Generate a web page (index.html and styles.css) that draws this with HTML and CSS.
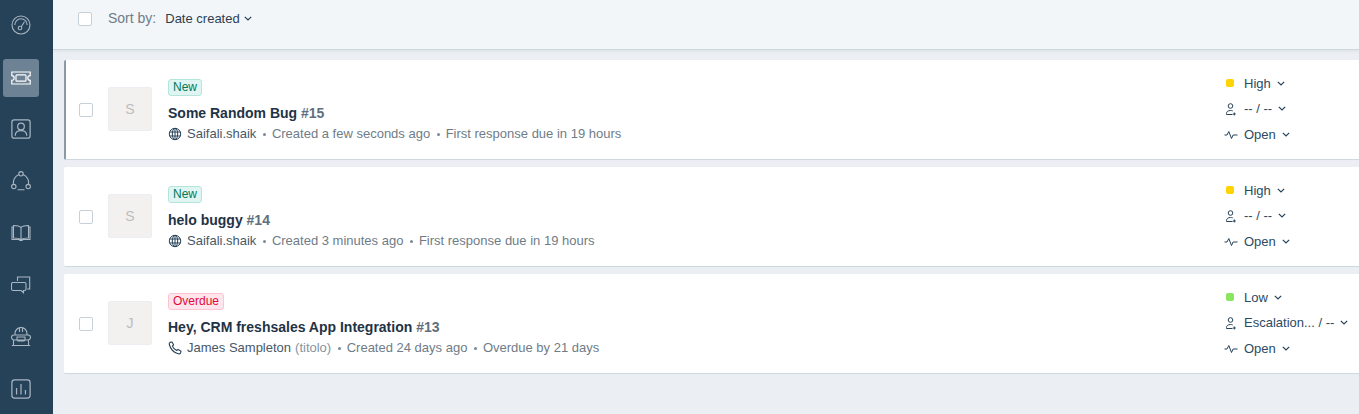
FILE: index.html
```html
<!DOCTYPE html>
<html lang="en">
<head>
<meta charset="utf-8">
<title>Tickets</title>
<link rel="stylesheet" href="styles.css">
</head>
<body>
<svg class="defs" width="0" height="0" aria-hidden="true">
  <symbol id="globe" viewBox="0 0 14 14"><g fill="none" stroke="currentColor" stroke-width="1"><circle cx="7" cy="7" r="5.700"/><ellipse cx="7" cy="7" rx="2.700" ry="5.700"/><path d="M7 1.300v11.400M1.600 5h10.800M1.600 9h10.800"/></g></symbol>
  <symbol id="phone" viewBox="0 0 14 14"><path fill="none" stroke="currentColor" stroke-width="1.100" stroke-linejoin="round" d="M2 1.400 4 1l1.600 2.800-1.200 1.300c.7 1.900 2.300 3.500 4.300 4.400l1.300-1.100L13 10.200l-.5 1.800c-.3.800-1.300 1-2.200.8C6 11.600 2.500 8 1.300 3.500 1.100 2.600 1.300 1.800 2 1.400Z"/></symbol>
  <symbol id="agent" viewBox="0 0 14 14"><g fill="none" stroke="currentColor" stroke-width="1"><circle cx="6.500" cy="4" r="2.300"/><path d="M2.500 12.500v-1c0-1.800 1.500-3 4-3 .8 0 1.500.1 2.200.4M2.500 12.500h6"/><path d="M10.300 10.500v3M8.800 12h3"/></g></symbol>
  <symbol id="pulse" viewBox="0 0 14 14"><path fill="none" stroke="currentColor" stroke-width="1" d="M.5 8h2.500l1.800-3.500 2.700 7 1.600-3.500h4.400"/></symbol>
  <symbol id="chev" viewBox="0 0 8 5"><path fill="none" stroke="currentColor" stroke-width="1.200" d="M.8.800 4 4l3.200-3.200"/></symbol>
</svg>

<div class="app">
  <nav class="rail">
    <a class="rail-item"><svg class="rail-icon" viewBox="0 0 20 20"><circle cx="10" cy="10" r="9"/><path d="M3.800 10A6.200 6.200 0 0 1 10 3.800a6.200 6.200 0 0 1 6.200 6.200"/><circle cx="9" cy="13" r="1.800"/><path d="m10.200 11.700 3.300-5"/></svg></a>
    <a class="rail-item active"><svg class="rail-icon ticket" viewBox="0 0 20 14"><path d="M.8 1h18.400v3.600a2.400 2.400 0 0 0 0 4.800V13H.8V9.400a2.400 2.400 0 0 0 0-4.800Z"/><rect x="5" y="3.800" width="10" height="6.400" rx="1"/></svg></a>
    <a class="rail-item"><svg class="rail-icon" viewBox="0 0 18 18"><rect x=".8" y=".8" width="16.400" height="16.400" rx="2"/><circle cx="9" cy="6.800" r="3"/><path d="M3.800 15c0-3 2-4.500 5.200-4.500s5.200 1.500 5.200 4.500"/></svg></a>
    <a class="rail-item"><svg class="rail-icon" viewBox="0 0 20 20"><circle cx="10" cy="2.800" r="2.200"/><circle cx="2.800" cy="15.600" r="2.200"/><circle cx="17.200" cy="15.600" r="2.200"/><path d="M7.900 3.600A8.800 8.800 0 0 0 2.400 13.300M12.100 3.600a8.800 8.800 0 0 1 5.500 9.700M6.500 18.800h7"/></svg></a>
    <a class="rail-item"><svg class="rail-icon" viewBox="0 0 20 18"><path d="M10 3.500C8.500 2 6 1.500 2.500 1.500v12.500c3.500 0 6 .5 7.500 1.500 1.500-1 4-1.500 7.500-1.500V1.500C14 1.500 11.500 2 10 3.500ZM10 3.500v12M2.500 3H1v12.500h7l1 1h2l1-1h7V3h-1.500"/></svg></a>
    <a class="rail-item"><svg class="rail-icon" viewBox="0 0 20 20"><path d="M6.500 6V2h12.200v12h-2.500"/><path d="M2 7.500h11.500c.8 0 1.500.7 1.500 1.500v5c0 .8-.7 1.500-1.500 1.500h-1v2.200l-2.400-2.200H2c-.8 0-1.500-.7-1.500-1.500V9c0-.8.700-1.500 1.500-1.500Z"/></svg></a>
    <a class="rail-item"><svg class="rail-icon" viewBox="0 0 20 20"><path d="M4 8V6.500a6 6 0 0 1 12 0V8M8.500 1v4M11.500 1v4M3 8h14c1.500 0 2.500 1 2.500 2.300S18.500 13 17 13h-3l-1 1H7l-1-1H3c-1.500 0-2.500-1.200-2.500-2.700S1.500 8 3 8ZM6 10h8v3H6ZM2.500 13v5M17.500 13v5M.8 18.500h18.400"/></svg></a>
    <a class="rail-item"><svg class="rail-icon" viewBox="0 0 18 18"><rect x=".8" y=".8" width="16.400" height="16.400" rx="2.500"/><path d="M5 8v6M9 4.500V14M13 10v4"/></svg></a>
  </nav>

  <main class="main">
    <header class="toolbar">
      <span class="checkbox"></span>
      <span class="sort-label">Sort by:</span>
      <span class="sort-value">Date created</span>
      <svg class="chev sort-chev"><use href="#chev"/></svg>
    </header>

    <section class="list">
      <article class="card selected">
        <span class="checkbox"></span>
        <div class="avatar">S</div>
        <div class="body">
          <span class="badge new">New</span>
          <h2 class="title">Some Random Bug <span class="num">#15</span></h2>
          <p class="meta"><svg class="source"><use href="#globe"/></svg><span class="who">Saifali.shaik</span><span class="dot"></span>Created a few seconds ago<span class="dot"></span>First response due in 19 hours</p>
        </div>
        <div class="props">
          <div class="prop"><span class="lead"><i class="pri high"></i></span>High<svg class="chev"><use href="#chev"/></svg></div>
          <div class="prop"><span class="lead"><svg class="pico"><use href="#agent"/></svg></span>-- / --<svg class="chev"><use href="#chev"/></svg></div>
          <div class="prop"><span class="lead"><svg class="pico"><use href="#pulse"/></svg></span>Open<svg class="chev"><use href="#chev"/></svg></div>
        </div>
      </article>

      <article class="card">
        <span class="checkbox"></span>
        <div class="avatar">S</div>
        <div class="body">
          <span class="badge new">New</span>
          <h2 class="title">helo buggy <span class="num">#14</span></h2>
          <p class="meta"><svg class="source"><use href="#globe"/></svg><span class="who">Saifali.shaik</span><span class="dot"></span>Created 3 minutes ago<span class="dot"></span>First response due in 19 hours</p>
        </div>
        <div class="props">
          <div class="prop"><span class="lead"><i class="pri high"></i></span>High<svg class="chev"><use href="#chev"/></svg></div>
          <div class="prop"><span class="lead"><svg class="pico"><use href="#agent"/></svg></span>-- / --<svg class="chev"><use href="#chev"/></svg></div>
          <div class="prop"><span class="lead"><svg class="pico"><use href="#pulse"/></svg></span>Open<svg class="chev"><use href="#chev"/></svg></div>
        </div>
      </article>

      <article class="card">
        <span class="checkbox"></span>
        <div class="avatar">J</div>
        <div class="body">
          <span class="badge overdue">Overdue</span>
          <h2 class="title">Hey, CRM freshsales App Integration <span class="num">#13</span></h2>
          <p class="meta"><svg class="source"><use href="#phone"/></svg><span class="who">James Sampleton</span><span class="org">(titolo)</span><span class="dot"></span>Created 24 days ago<span class="dot"></span>Overdue by 21 days</p>
        </div>
        <div class="props">
          <div class="prop"><span class="lead"><i class="pri low"></i></span>Low<svg class="chev"><use href="#chev"/></svg></div>
          <div class="prop"><span class="lead"><svg class="pico"><use href="#agent"/></svg></span>Escalation... / --<svg class="chev"><use href="#chev"/></svg></div>
          <div class="prop"><span class="lead"><svg class="pico"><use href="#pulse"/></svg></span>Open<svg class="chev"><use href="#chev"/></svg></div>
        </div>
      </article>
    </section>
  </main>
</div>
</body>
</html>
```
FILE: styles.css
```css
* { box-sizing: border-box; }
html, body { margin: 0; height: 100%; overflow: hidden; }
body {
  font-family: "Liberation Sans", Arial, sans-serif;
  font-size: 13px;
  color: #475867;
  background: #ebeff3;
}
.defs { position: absolute; }
.app { display: flex; height: 414px; }

.rail {
  width: 53px;
  flex: none;
  background: #264259;
  display: flex;
  flex-direction: column;
  gap: 14px;
  padding: 6px 0 0 3px;
}
.rail-item {
  width: 36px;
  height: 38px;
  flex: none;
  border-radius: 3px;
  display: flex;
  align-items: center;
  justify-content: center;
}
.rail-item.active { background: #6d8294; margin: 1px 0 -1px; }
.rail-icon {
  width: 20px;
  height: 20px;
  fill: none;
  stroke: #a9b6c1;
  stroke-width: 1.100;
}
.active .rail-icon { stroke: #fff; }
.rail-icon.ticket { height: 14px; stroke-width: 1.200; }

.main { flex: 1; min-width: 0; }
.toolbar {
  height: 50px;
  background: #f3f6f9;
  border-bottom: 1px solid #cfd7df;
  box-shadow: 0 1px 3px rgba(18, 52, 77, .08);
  display: flex;
  align-items: center;
  padding: 0 0 12px 25px;
}
.checkbox {
  width: 14px;
  height: 14px;
  flex: none;
  background: #fff;
  border: 1px solid #c7d0d9;
  border-radius: 2px;
}
.sort-label { margin-left: 16px; color: #6f7c87; font-size: 14px; margin-top: -1px; }
.sort-value { margin-left: 9px; color: #2c3e50; }
.chev { width: 8px; height: 5px; color: #264259; flex: none; margin-left: 6px; }
.sort-chev { margin-left: 4px; }

.list {
  display: flex;
  flex-direction: column;
  gap: 7px;
  padding: 10px 0 0 11px;
}
.card {
  height: 100px;
  background: #fff;
  border-bottom: 1px solid #cfd7df;
  border-radius: 2px 0 0 2px;
  display: flex;
  padding: 0 0 0 15px;
}
.card.selected { border-left: 2px solid #8b98a5; padding-left: 13px; }
.card > .checkbox { margin-top: 43px; }
.avatar {
  width: 44px;
  height: 44px;
  flex: none;
  margin: 27px 0 0 15px;
  background: #f2f1ef;
  border: 1px solid #ebeff3;
  border-radius: 2px;
  color: #bdbdbd;
  font-size: 14px;
  display: flex;
  align-items: center;
  justify-content: center;
}
.body { margin-left: 16px; padding-top: 19px; flex: 1; min-width: 0; }
.badge {
  display: block;
  width: fit-content;
  height: 17px;
  line-height: 15px;
  padding: 0 4px;
  font-size: 12px;
  border: 1px solid;
  border-radius: 3px;
}
.badge.new { color: #00795b; background: #e0f5f1; border-color: #b4e5da; }
.badge.overdue { color: #e0093a; background: #ffe5ec; border-color: #ffc4d4; }
.title {
  margin: 8px 0 0;
  font-size: 14px;
  line-height: 18px;
  font-weight: 700;
  color: #1f3346;
}
.num { color: #5f6f7e; font-weight: 700; }
.meta {
  margin: 3px 0 0;
  height: 18px;
  line-height: 18px;
  display: flex;
  align-items: center;
  color: #6f7c87;
}
.source { width: 14px; height: 14px; flex: none; color: #264259; margin-right: 5px; }
.who { color: #475867; }
.org { margin-left: 4px; color: #8594a1; }
.dot { width: 3px; height: 3px; border-radius: 50%; background: #7b8894; margin: 1px 6px 0 6.500px; flex: none; }

.props {
  width: 134px;
  flex: none;
  padding-top: 14px;
  display: flex;
  flex-direction: column;
  gap: 7.500px;
}
.prop {
  height: 18px;
  display: flex;
  align-items: center;
  color: #2c4a63;
}
.lead { width: 19px; flex: none; display: flex; align-items: center; }
.pri { width: 8px; height: 8px; border-radius: 2px; margin-left: 1px; }
.pri.high { background: #ffd400; }
.pri.low { background: #8ae65e; }
.pico { width: 14px; height: 14px; color: #264259; margin-left: -1px; }
```
